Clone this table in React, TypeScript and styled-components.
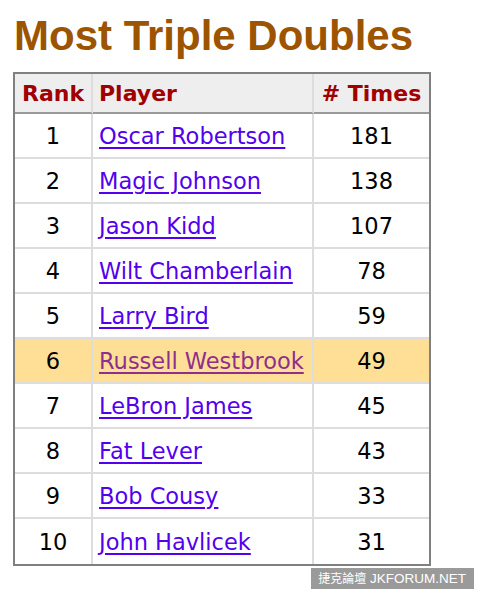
import React from 'react';
import { styled, createGlobalStyle } from 'styled-components';

const GlobalStyle = createGlobalStyle`
  html, body {
    margin: 0;
    padding: 0;
    background: #ffffff;
  }
`;

const players = [
  { rank: 1, name: 'Oscar Robertson', times: 181 },
  { rank: 2, name: 'Magic Johnson', times: 138 },
  { rank: 3, name: 'Jason Kidd', times: 107 },
  { rank: 4, name: 'Wilt Chamberlain', times: 78 },
  { rank: 5, name: 'Larry Bird', times: 59 },
  { rank: 6, name: 'Russell Westbrook', times: 49, highlight: true },
  { rank: 7, name: 'LeBron James', times: 45 },
  { rank: 8, name: 'Fat Lever', times: 43 },
  { rank: 9, name: 'Bob Cousy', times: 33 },
  { rank: 10, name: 'John Havlicek', times: 31 },
];

const App = () => {
  return (
    <Page>
      <GlobalStyle />
      <Title>Most Triple Doubles</Title>
      <Table>
        <thead>
          <tr>
            <Th $align="center">Rank</Th>
            <Th $align="left">Player</Th>
            <Th $align="center">#&nbsp;Times</Th>
          </tr>
        </thead>
        <tbody>
          {players.map((p) => (
            <Row key={p.rank} $highlight={!!p.highlight}>
              <Td $align="center">{p.rank}</Td>
              <Td $align="left">
                <PlayerLink href="#" $visited={!!p.highlight}>{p.name}</PlayerLink>
              </Td>
              <Td $align="center">{p.times}</Td>
            </Row>
          ))}
        </tbody>
      </Table>
      <Footer>
        <Watermark>
          <Cjk>捷克論壇</Cjk> JKFORUM.NET
        </Watermark>
      </Footer>
    </Page>
  );
};

const Page = styled.div`
  width: 479px;
  height: 593px;
  padding: 13px 0 0 13px;
  box-sizing: border-box;
  overflow: hidden;
`;

const Title = styled.h1`
  margin: 0 0 14px 1px;
  font-family: "Liberation Sans", Arial, sans-serif;
  font-size: 42px;
  font-weight: 700;
  line-height: 45px;
  color: #9c5400;
`;

const Table = styled.table`
  border-collapse: separate;
  border-spacing: 0;
  border: 2px solid #808080;
  font-family: "DejaVu Sans", Verdana, sans-serif;
`;

const Th = styled.th<{ $align: string }>`
  height: 40px;
  padding: 0 6px;
  box-sizing: border-box;
  background: #eeeeee;
  color: #a00000;
  font-family: "DejaVu Sans", Verdana, sans-serif;
  font-size: 22px;
  font-weight: 700;
  text-align: ${(p) => p.$align};
  border-right: 2px solid #dddddd;
  border-bottom: 2px solid #9a9a9a;
  &:first-child {
    width: 78px;
  }
  &:nth-child(2) {
    width: 221px;
  }
  &:last-child {
    width: 115px;
    border-right: none;
  }
`;

const Row = styled.tr<{ $highlight: boolean }>`
  background: ${(p) => (p.$highlight ? '#ffdf96' : '#ffffff')};
  &:last-child td {
    border-bottom: none;
  }
`;

const Td = styled.td<{ $align: string }>`
  height: 45px;
  padding: 0 6px;
  box-sizing: border-box;
  font-size: 22.5px;
  color: #000000;
  text-align: ${(p) => p.$align};
  border-right: 2px solid #dddddd;
  border-bottom: 2px solid #dddddd;
  white-space: nowrap;
  &:last-child {
    border-right: none;
  }
`;

const PlayerLink = styled.a<{ $visited: boolean }>`
  color: ${(p) => (p.$visited ? '#8e2f8e' : '#5200ee')};
  text-decoration: underline;
  text-underline-offset: 3px;
`;

const Footer = styled.div`
  display: flex;
  justify-content: flex-end;
  width: 461px;
  margin-top: 2px;
`;

const Watermark = styled.div`
  background: #9a9a9a;
  color: #ffffff;
  font-family: "Liberation Sans", "Noto Sans CJK TC", sans-serif;
  font-size: 13.5px;
  line-height: 20px;
  padding: 0 8px 0 7px;
`;

const Cjk = styled.span`
  font-family: "Noto Sans CJK TC", sans-serif;
  font-size: 12px;
`;

export default App;
